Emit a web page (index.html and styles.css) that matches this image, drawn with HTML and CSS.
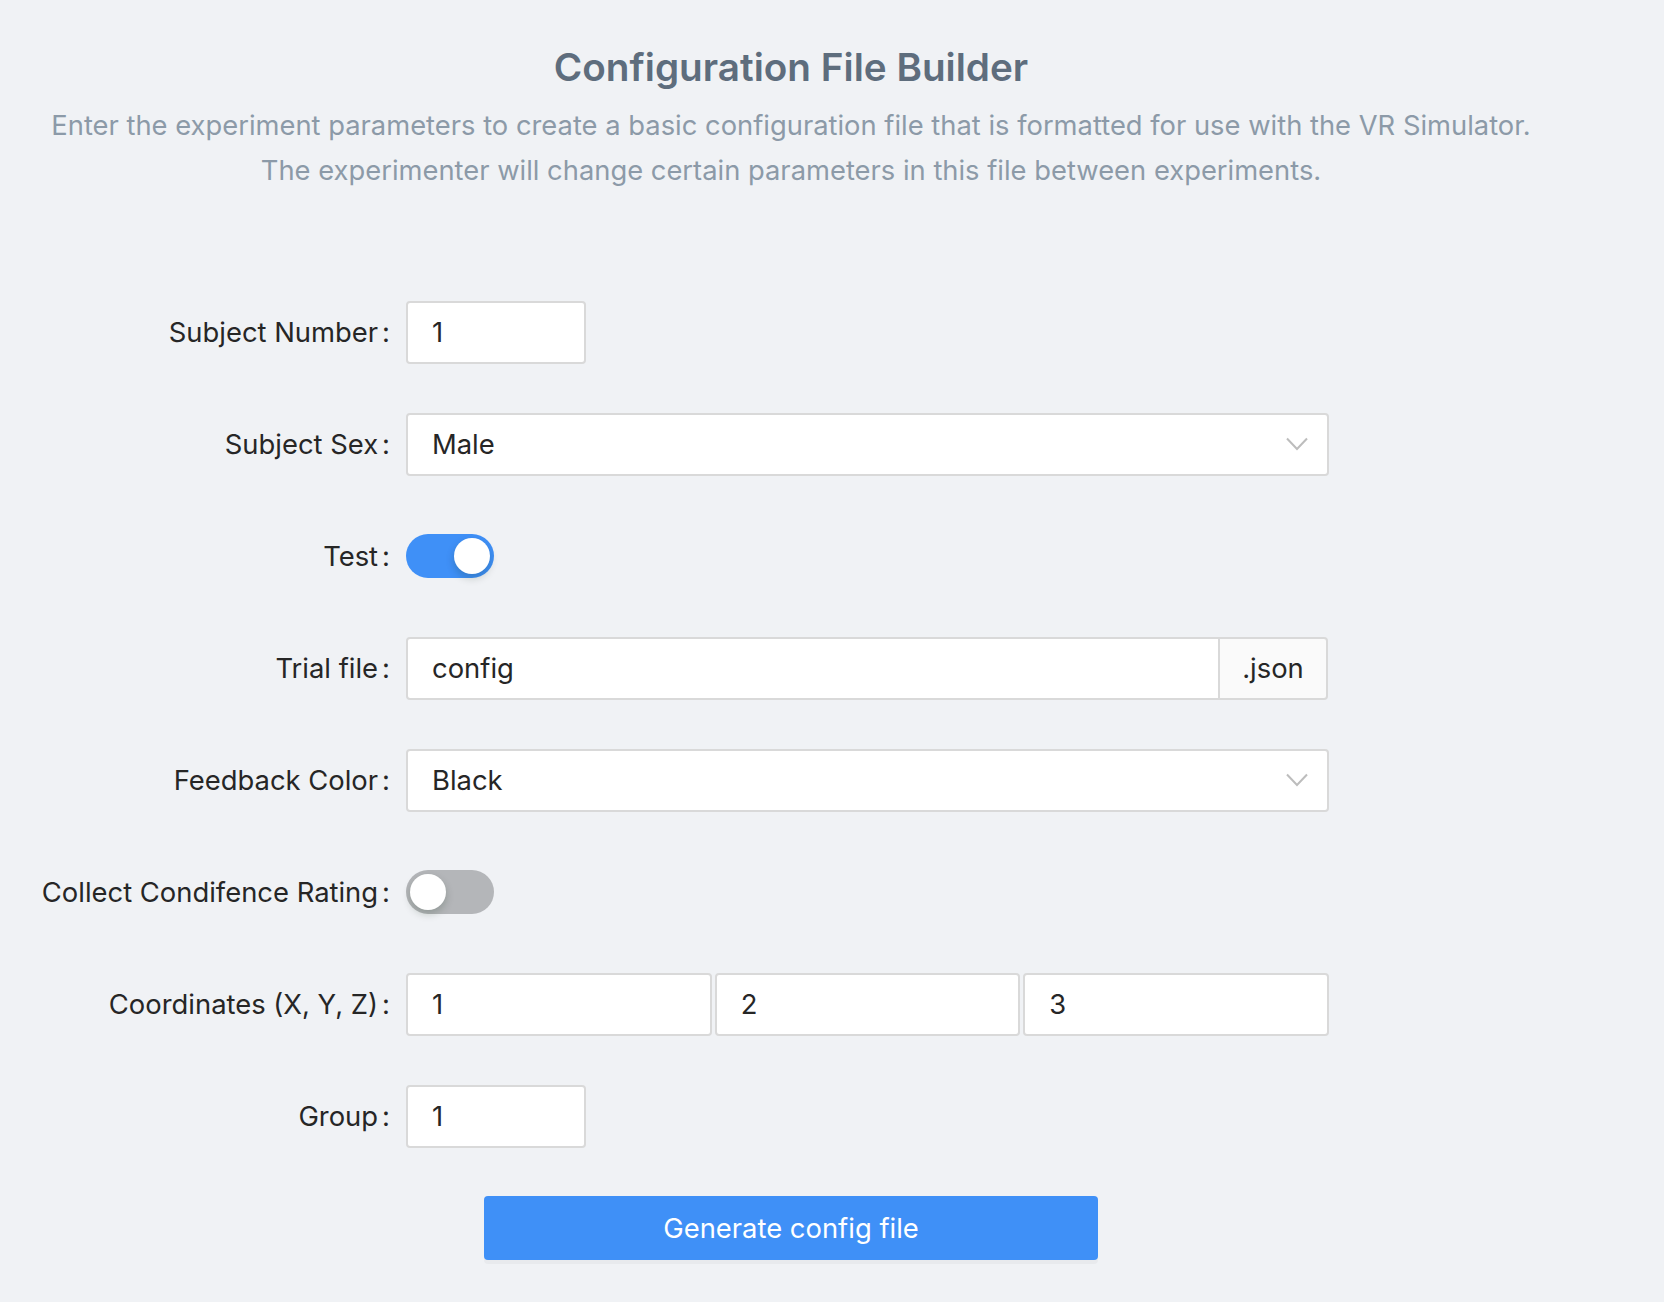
FILE: index.html
```html
<!DOCTYPE html>
<html lang="en">
<head>
<meta charset="utf-8">
<title>Configuration File Builder</title>
<link rel="stylesheet" href="styles.css">
</head>
<body>
<div class="page">
  <header class="header">
    <h1 class="title">Configuration File Builder</h1>
    <p class="desc">Enter the experiment parameters to create a basic configuration file that is formatted for use with the VR Simulator.<br>The experimenter will change certain parameters in this file between experiments.</p>
  </header>

  <form class="form">
    <div class="row">
      <label class="label">Subject Number</label>
      <div class="control"><div class="input small">1</div></div>
    </div>

    <div class="row">
      <label class="label">Subject Sex</label>
      <div class="control">
        <div class="input select">
          <span>Male</span>
          <svg class="arrow" width="22" height="14" viewBox="0 0 22 14"><path d="M1 1.5 L11 12 L21 1.5" fill="none" stroke="#bdbdbd" stroke-width="2"/></svg>
        </div>
      </div>
    </div>

    <div class="row">
      <label class="label">Test</label>
      <div class="control"><span class="switch on"><span class="knob"></span></span></div>
    </div>

    <div class="row">
      <label class="label">Trial file</label>
      <div class="control">
        <div class="group">
          <div class="input grow">config</div>
          <div class="addon">.json</div>
        </div>
      </div>
    </div>

    <div class="row">
      <label class="label">Feedback Color</label>
      <div class="control">
        <div class="input select">
          <span>Black</span>
          <svg class="arrow" width="22" height="14" viewBox="0 0 22 14"><path d="M1 1.5 L11 12 L21 1.5" fill="none" stroke="#bdbdbd" stroke-width="2"/></svg>
        </div>
      </div>
    </div>

    <div class="row">
      <label class="label">Collect Condifence Rating</label>
      <div class="control"><span class="switch"><span class="knob"></span></span></div>
    </div>

    <div class="row">
      <label class="label">Coordinates (X, Y, Z)</label>
      <div class="control">
        <div class="triple">
          <div class="input">1</div>
          <div class="input">2</div>
          <div class="input">3</div>
        </div>
      </div>
    </div>

    <div class="row">
      <label class="label">Group</label>
      <div class="control"><div class="input small">1</div></div>
    </div>

    <div class="actions">
      <button type="button" class="btn">Generate config file</button>
    </div>
  </form>
</div>
</body>
</html>
```

FILE: styles.css
```css
html, body {
  margin: 0;
  padding: 0;
  background: #f0f2f5;
}

body {
  font-family: "Inter", "Liberation Sans", sans-serif;
  color: #262626;
}

.page {
  width: 1582px;
  padding-top: 43px;
  padding-bottom: 42px;
}

.header {
  text-align: center;
}

.title {
  margin: 0;
  font-size: 38.7px;
  line-height: 48px;
  font-weight: 600;
  color: #5e6d7d;
}

.desc {
  margin: 12px 0 0;
  font-size: 27.35px;
  line-height: 45px;
  color: #8c9aa8;
}

.form {
  margin-top: 107px;
}

.row {
  display: flex;
  align-items: center;
  height: 64px;
  margin-bottom: 48px;
}

.label {
  width: 406px;
  box-sizing: border-box;
  text-align: right;
  font-size: 27.4px;
  color: #262626;
  white-space: nowrap;
}

.label::after {
  content: ":";
  margin: 0 16px 0 4px;
}

.control {
  width: 923px;
  display: flex;
  align-items: center;
}

.input {
  box-sizing: border-box;
  height: 63px;
  background: #fff;
  border: 2px solid #d9d9d9;
  border-radius: 4px;
  padding: 0 24px;
  display: flex;
  align-items: center;
  font-size: 27.4px;
  color: #262626;
}

.input.small {
  width: 180px;
}

.select {
  width: 923px;
  justify-content: space-between;
  padding-right: 19px;
}

.arrow {
  display: block;
}

.group {
  display: flex;
  width: 922px;
}

.input.grow {
  flex: 1;
  border-radius: 4px 0 0 4px;
}

.addon {
  box-sizing: border-box;
  height: 63px;
  width: 110px;
  margin-left: -2px;
  background: #fafafa;
  border: 2px solid #d9d9d9;
  border-radius: 0 4px 4px 0;
  display: flex;
  align-items: center;
  justify-content: center;
  font-size: 27.4px;
  color: #262626;
}

.triple {
  display: flex;
  gap: 3px;
  width: 923px;
}

.triple .input {
  flex: 1;
}

.switch {
  position: relative;
  display: inline-block;
  width: 88px;
  height: 44px;
  border-radius: 22px;
  background: #b4b6b9;
}

.switch.on {
  background: #3f90f7;
}

.knob {
  position: absolute;
  top: 4px;
  left: 4px;
  width: 36px;
  height: 36px;
  border-radius: 50%;
  background: #fff;
  box-shadow: 0 4px 8px rgba(0, 35, 11, 0.2);
}

.switch.on .knob {
  left: 48px;
}

.actions {
  display: flex;
  justify-content: center;
}

.btn {
  width: 614px;
  height: 64px;
  border: none;
  border-radius: 4px;
  background: #3f90f7;
  color: #fff;
  font-family: "Inter", "Liberation Sans", sans-serif;
  font-size: 27.4px;
  box-shadow: 0 4px 0 rgba(0, 0, 0, 0.03);
  cursor: pointer;
}
```
